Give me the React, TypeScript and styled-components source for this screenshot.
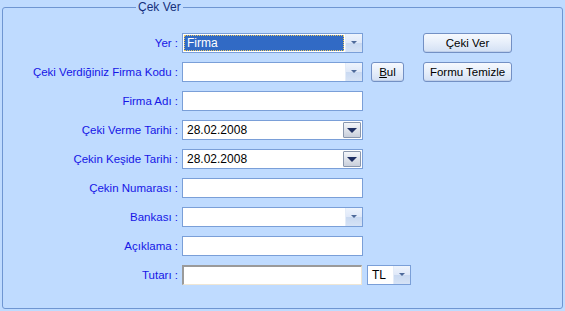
import React from "react";
import styled, { createGlobalStyle } from "styled-components";

const Global = createGlobalStyle`
  body {
    margin: 0;
    background: #bfdbff;
    font-family: "Liberation Sans", Arial, sans-serif;
    font-size: 11px;
  }
`;

const Page = styled.div`
  width: 565px;
  height: 311px;
  padding: 7px 2px 2px 2px;
  box-sizing: border-box;
`;

const Group = styled.div`
  position: relative;
  height: 100%;
  box-sizing: border-box;
  border: 1px solid #6f96d2;
  border-radius: 3px;
  padding-top: 25px;
`;

const Title = styled.div`
  position: absolute;
  top: -8px;
  left: 133px;
  padding: 0 2px;
  background: #bfdbff;
  color: #15307c;
  font-size: 12px;
  line-height: 14px;
`;

const Form = styled.div`
  display: grid;
  grid-template-columns: 179px 181px 60px 89px;
  grid-auto-rows: 20px;
  row-gap: 9px;
`;

const Label = styled.div`
  grid-column: 1;
  text-align: right;
  padding-right: 4px;
  color: #1616e6;
  font-size: 11.5px;
  line-height: 20px;
  white-space: nowrap;
`;

const Box = styled.div<{ $sunken?: boolean }>`
  grid-column: 2;
  display: flex;
  align-items: stretch;
  box-sizing: border-box;
  background: #fff;
  border: 1px solid #7a9fd8;
  ${(p) =>
    p.$sunken &&
    `
    border-color: #9a9a9a #efe6d4 #efe6d4 #9a9a9a;
    border-width: 2px 1px 1px 2px;
    margin-right: 1px;
  `}
`;

const Value = styled.div<{ $selected?: boolean }>`
  flex: 1;
  display: flex;
  align-items: center;
  padding-left: 3px;
  margin: 1px;
  color: ${(p) => (p.$selected ? "#fff" : "#000")};
  background: ${(p) => (p.$selected ? "#316ac5" : "transparent")};
  outline: ${(p) => (p.$selected ? "1px dotted #e8c860" : "none")};
  outline-offset: -1px;
  font-size: 12px;
`;

const ComboBtn = styled.div`
  width: 16px;
  display: flex;
  align-items: center;
  justify-content: center;
  background: linear-gradient(#eef4fd 0%, #dfe8f8 50%, #c9d9f1 51%, #d6e3f6 100%);
  border-left: 1px solid #e4ecf8;
`;

const SmallArrow = styled.div`
  width: 0;
  height: 0;
  border-left: 3px solid transparent;
  border-right: 3px solid transparent;
  border-top: 3px solid #4e6a9a;
  margin-top: -2px;
`;

const DateBtn = styled.div`
  width: 16px;
  margin: 1px;
  display: flex;
  align-items: center;
  justify-content: center;
  border: 1px solid #8a97ad;
  border-radius: 1px;
  background: linear-gradient(#f4f6fa, #c9cfdb);
`;

const BigArrow = styled.div`
  width: 0;
  height: 0;
  border-left: 5px solid transparent;
  border-right: 5px solid transparent;
  border-top: 5px solid #1f2f63;
`;

const Button = styled.button<{ $col: number; $w?: number; $ml?: number }>`
  grid-column: ${(p) => p.$col};
  width: ${(p) => p.$w ?? 89}px;
  margin-left: ${(p) => p.$ml ?? 0}px;
  height: 20px;
  padding: 0;
  font-family: "Liberation Sans", Arial, sans-serif;
  font-size: 11.5px;
  color: #000;
  border: 1px solid #7390c4;
  border-radius: 3px;
  background: linear-gradient(#f6f9fe 0%, #e6eefa 50%, #d3e0f4 100%);
  box-shadow: inset 0 -1px 0 #c0d0ea;
`;

const TLBox = styled.div`
  grid-column: 3;
  width: 44px;
  margin-left: 4px;
  display: flex;
  box-sizing: border-box;
  background: #fff;
  border: 1px solid #7a9fd8;
`;

type FieldKind = "combo" | "text" | "date" | "sunken";

const Field = ({ kind, value, selected }: { kind: FieldKind; value?: string; selected?: boolean }) => (
  <Box $sunken={kind === "sunken"}>
    <Value $selected={selected}>{value}</Value>
    {kind === "combo" && (
      <ComboBtn>
        <SmallArrow />
      </ComboBtn>
    )}
    {kind === "date" && (
      <DateBtn>
        <BigArrow />
      </DateBtn>
    )}
  </Box>
);

export default function App() {
  return (
    <Page>
      <Global />
      <Group>
        <Title>Çek Ver</Title>
        <Form>
          <Label>Yer :</Label>
          <Field kind="combo" value="Firma" selected />
          <Button $col={4}>Çeki Ver</Button>

          <Label>Çeki Verdiğiniz Firma Kodu :</Label>
          <Field kind="combo" />
          <Button $col={3} $w={33} $ml={8}>
            <u>B</u>ul
          </Button>
          <Button $col={4}>Formu Temizle</Button>

          <Label>Firma Adı :</Label>
          <Field kind="text" />

          <Label>Çeki Verme Tarihi :</Label>
          <Field kind="date" value="28.02.2008" />

          <Label>Çekin Keşide Tarihi :</Label>
          <Field kind="date" value="28.02.2008" />

          <Label>Çekin Numarası :</Label>
          <Field kind="text" />

          <Label>Bankası :</Label>
          <Field kind="combo" />

          <Label>Açıklama :</Label>
          <Field kind="text" />

          <Label>Tutarı :</Label>
          <Field kind="sunken" />
          <TLBox>
            <Value>TL</Value>
            <ComboBtn>
              <SmallArrow />
            </ComboBtn>
          </TLBox>
        </Form>
      </Group>
    </Page>
  );
}
